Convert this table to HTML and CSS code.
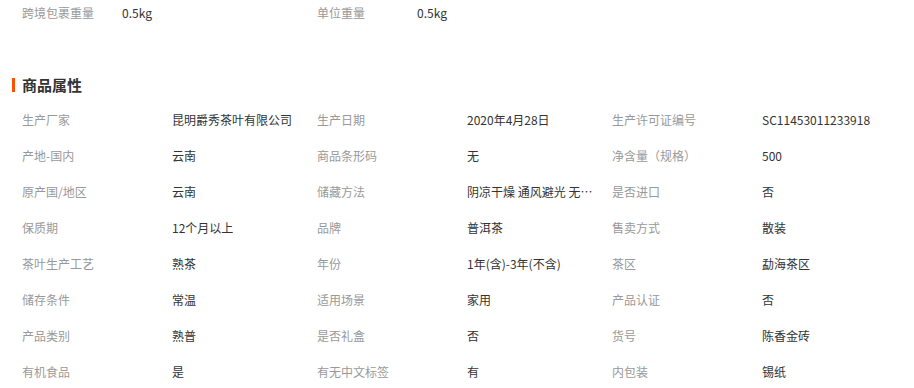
FILE: index.html
```html
<!DOCTYPE html>
<html lang="zh">
<head>
<meta charset="utf-8">
<link rel="stylesheet" href="styles.css">
</head>
<body>
<div class="page">
  <div class="top-row">
    <div class="pair"><span class="tlabel">跨境包裹重量</span><span class="tvalue">0.5kg</span></div>
    <div class="pair"><span class="tlabel">单位重量</span><span class="tvalue">0.5kg</span></div>
  </div>
  <h3 class="heading">商品属性</h3>
  <div class="attrs">
    <div class="attr"><span class="label">生产厂家</span><span class="value">昆明爵秀茶叶有限公司</span></div>
    <div class="attr"><span class="label">生产日期</span><span class="value">2020年4月28日</span></div>
    <div class="attr"><span class="label">生产许可证编号</span><span class="value">SC11453011233918</span></div>
    <div class="attr"><span class="label">产地-国内</span><span class="value">云南</span></div>
    <div class="attr"><span class="label">商品条形码</span><span class="value">无</span></div>
    <div class="attr"><span class="label">净含量（规格）</span><span class="value">500</span></div>
    <div class="attr"><span class="label">原产国/地区</span><span class="value">云南</span></div>
    <div class="attr"><span class="label">储藏方法</span><span class="value">阴凉干燥 通风避光 无异味</span></div>
    <div class="attr"><span class="label">是否进口</span><span class="value">否</span></div>
    <div class="attr"><span class="label">保质期</span><span class="value">12个月以上</span></div>
    <div class="attr"><span class="label">品牌</span><span class="value">普洱茶</span></div>
    <div class="attr"><span class="label">售卖方式</span><span class="value">散装</span></div>
    <div class="attr"><span class="label">茶叶生产工艺</span><span class="value">熟茶</span></div>
    <div class="attr"><span class="label">年份</span><span class="value">1年(含)-3年(不含)</span></div>
    <div class="attr"><span class="label">茶区</span><span class="value">勐海茶区</span></div>
    <div class="attr"><span class="label">储存条件</span><span class="value">常温</span></div>
    <div class="attr"><span class="label">适用场景</span><span class="value">家用</span></div>
    <div class="attr"><span class="label">产品认证</span><span class="value">否</span></div>
    <div class="attr"><span class="label">产品类别</span><span class="value">熟普</span></div>
    <div class="attr"><span class="label">是否礼盒</span><span class="value">否</span></div>
    <div class="attr"><span class="label">货号</span><span class="value">陈香金砖</span></div>
    <div class="attr"><span class="label">有机食品</span><span class="value">是</span></div>
    <div class="attr"><span class="label">有无中文标签</span><span class="value">有</span></div>
    <div class="attr"><span class="label">内包装</span><span class="value">锡纸</span></div>
  </div>
</div>
</body>
</html>
```
FILE: styles.css
```css
* { box-sizing: border-box; }
html, body { margin: 0; padding: 0; background: #fff; }
body {
  font-family: "Noto Sans CJK SC", "Liberation Sans", sans-serif;
  font-size: 12px;
  color: #333;
}
.page { width: 914px; }
.top-row {
  display: grid;
  grid-template-columns: 295px 295px;
  padding-left: 22px;
  height: 26px;
  line-height: 26px;
}
.pair { display: flex; }
.tlabel { width: 100px; color: #999; }
.tvalue { color: #333; }
.heading {
  margin: 46px 0 4px 12px;
  padding-left: 10px;
  height: 26px;
  line-height: 26px;
  font-size: 15px;
  font-weight: bold;
  color: #333;
  position: relative;
}
.heading::before {
  content: "";
  position: absolute;
  left: 0;
  top: 6px;
  width: 3px;
  height: 14px;
  background: #ff5000;
}
.attrs {
  display: grid;
  grid-template-columns: 295px 295px 295px;
  padding-left: 22px;
}
.attr {
  display: flex;
  height: 36px;
  line-height: 36px;
}
.label { width: 150px; flex: none; color: #999; }
.value {
  width: 130px;
  color: #333;
  white-space: nowrap;
  overflow: hidden;
  text-overflow: ellipsis;
}
```
